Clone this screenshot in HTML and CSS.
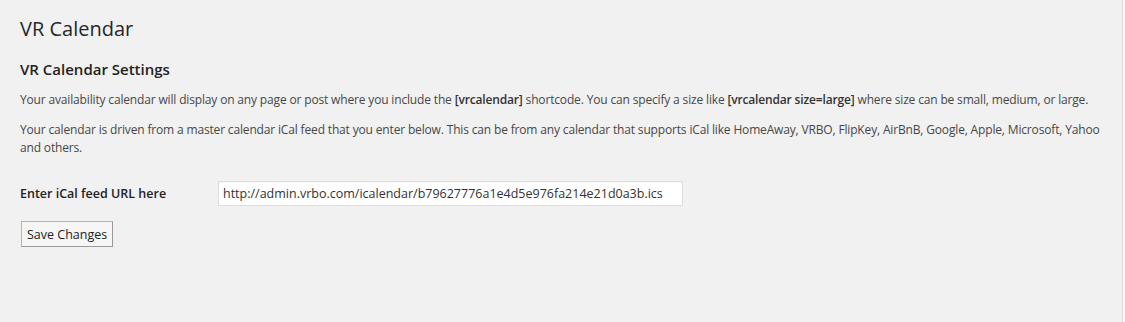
FILE: index.html
```html
<!DOCTYPE html>
<html>
<head>
<meta charset="utf-8">
<title>VR Calendar</title>
<link rel="stylesheet" href="styles.css">
</head>
<body>
<div class="page">
  <div class="wrap">
    <h2 class="title">VR Calendar</h2>
    <h3 class="subtitle">VR Calendar Settings</h3>
    <p class="desc">Your availability calendar will display on any page or post where you include the <strong>[vrcalendar]</strong> shortcode. You can specify a size like <strong>[vrcalendar size=large]</strong> where size can be small, medium, or large.</p>
    <p class="desc">Your calendar is driven from a master calendar iCal feed that you enter below. This can be from any calendar that supports iCal like HomeAway, VRBO, FlipKey, AirBnB, Google, Apple, Microsoft, Yahoo and others.</p>
    <div class="form-row">
      <label class="field-label" for="ical">Enter iCal feed URL here</label>
      <input class="field-input" id="ical" type="text" value="http://admin.vrbo.com/icalendar/b79627776a1e4d5e976fa214e21d0a3b.ics">
    </div>
    <div class="submit">
      <button class="button" type="button">Save Changes</button>
    </div>
  </div>
</div>
</body>
</html>
```

FILE: styles.css
```css
html {
  background: #fafafa;
}
body {
  margin: 0;
  font-family: "Open Sans", "Noto Sans", sans-serif;
  color: #444;
  font-size: 13px;
}
.page {
  min-height: 322px;
  background: #f1f1f1;
  margin-right: 2px;
  border-right: 1px solid #dcdcdc;
}
.wrap {
  padding: 14px 20px 0 20px;
}
.title {
  margin: 0;
  font-size: 20px;
  font-weight: 400;
  line-height: 29px;
  color: #23282d;
}
.subtitle {
  margin: 16px 0 0 0;
  font-size: 15px;
  font-weight: 600;
  line-height: 20px;
  color: #222;
}
.desc {
  margin: 12px 0 0 0;
  font-size: 12px;
  line-height: 18px;
  letter-spacing: -0.16px;
  color: #474747;
}
.desc strong {
  font-weight: 600;
  color: #333;
}
.form-row {
  display: flex;
  align-items: center;
  margin-top: 24px;
}
.field-label {
  width: 198px;
  flex: none;
  font-size: 12.5px;
  font-weight: 600;
  color: #222;
  line-height: 18px;
}
.field-input {
  box-sizing: border-box;
  width: 465px;
  height: 25px;
  margin: 0;
  padding: 0 4px;
  border: 1px solid #ddd;
  background: #fff;
  font-family: "Open Sans", "Noto Sans", sans-serif;
  font-size: 12.5px;
  color: #333;
  box-shadow: inset 0 1px 2px rgba(0, 0, 0, 0.04);
}
.submit {
  margin-top: 15px;
  padding-left: 1px;
}
.button {
  box-sizing: border-box;
  height: 26px;
  padding: 0 5px;
  margin: 0;
  font-family: "Open Sans", "Noto Sans", sans-serif;
  font-size: 12.5px;
  color: #222;
  background: #f6f6f6;
  border: 1px solid #b5b5b5;
  border-right-color: #999;
  border-bottom-color: #999;
  border-radius: 0;
}
```
